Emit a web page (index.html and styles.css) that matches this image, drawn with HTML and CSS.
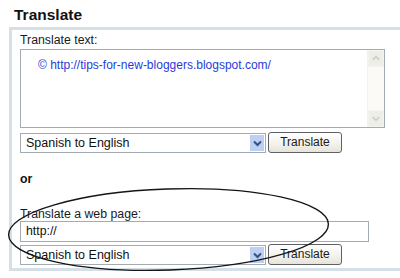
FILE: index.html
```html
<!DOCTYPE html>
<html>
<head>
<meta charset="utf-8">
<link rel="stylesheet" href="styles.css">
</head>
<body>
<div class="page">
  <h2 class="title">Translate</h2>
  <div class="box">
    <div class="label">Translate text:</div>
    <div class="textarea">
      <div class="ta-text">© http://tips-for-new-bloggers.blogspot.com/</div>
      <div class="scroll">
        <div class="sbtn"><svg width="15" height="15" viewBox="0 0 15 15"><path d="M4 9 L7.5 5.5 L11 9" fill="none" stroke="#cfcfc6" stroke-width="1.6"/></svg></div>
        <div class="strack"></div>
        <div class="sbtn"><svg width="15" height="15" viewBox="0 0 15 15"><path d="M4 6 L7.5 9.5 L11 6" fill="none" stroke="#cfcfc6" stroke-width="1.6"/></svg></div>
      </div>
    </div>
    <div class="row">
      <div class="select"><span class="sel-text">Spanish to English</span><span class="arrow"><svg width="9" height="7" viewBox="0 0 9 7"><path d="M1 1.5 L4.5 5 L8 1.5" fill="none" stroke="#3b4f7a" stroke-width="2"/></svg></span></div>
      <div class="button">Translate</div>
    </div>
    <div class="or">or</div>
    <div class="label label2">Translate a web page:</div>
    <div class="input">http://</div>
    <div class="row row2">
      <div class="select"><span class="sel-text">Spanish to English</span><span class="arrow"><svg width="9" height="7" viewBox="0 0 9 7"><path d="M1 1.5 L4.5 5 L8 1.5" fill="none" stroke="#3b4f7a" stroke-width="2"/></svg></span></div>
      <div class="button">Translate</div>
    </div>
  </div>
  <svg class="circle" width="400" height="278" viewBox="0 0 400 278"><ellipse cx="168.5" cy="229.5" rx="160" ry="40.5" transform="rotate(-2 168.5 229.5)" fill="none" stroke="#151515" stroke-width="1.4"/></svg>
</div>
</body>
</html>
```

FILE: styles.css
```css
html, body {
  margin: 0;
  padding: 0;
  background: #ffffff;
}
.page {
  position: relative;
  width: 400px;
  height: 278px;
  overflow: hidden;
  font-family: "Liberation Sans", Arial, sans-serif;
  color: #1a1a1a;
}
.title {
  margin: 0;
  padding: 5px 0 0 14px;
  height: 22px;
  font-size: 15.5px;
  font-weight: bold;
  line-height: 19px;
  color: #111;
}
.box {
  margin-left: 9px;
  width: 420px;
  border: 3px solid #d4dfe6;
  border-right: none;
  padding: 3px 0 3px 8px;
  display: flex;
  flex-direction: column;
  align-items: flex-start;
}
.label {
  font-size: 12.3px;
  line-height: 15px;
  height: 16px;
  color: #1a1a1a;
}
.textarea {
  width: 363px;
  height: 77px;
  border: 1px solid #a3abb3;
  display: flex;
  justify-content: space-between;
}
.ta-text {
  padding: 8px 0 0 17px;
  font-size: 12px;
  line-height: 14px;
  color: #1f3dd6;
}
.scroll {
  width: 16px;
  display: flex;
  flex-direction: column;
  background: #fbfaf6;
  border-left: 1px solid #f2f2ee;
}
.sbtn {
  height: 15px;
  background: #eeeee8;
  border: 1px solid #f4f4ef;
  display: flex;
  align-items: center;
  justify-content: center;
}
.strack {
  flex: 1;
}
.row {
  display: flex;
  align-items: flex-start;
  gap: 2px;
  margin-top: 4px;
}
.select {
  width: 244px;
  height: 18px;
  border: 1px solid #a3abb3;
  display: flex;
  align-items: center;
  justify-content: space-between;
  margin-top: 1px;
  background: #fff;
}
.sel-text {
  padding-left: 5px;
  font-size: 12.5px;
  color: #111;
}
.arrow {
  width: 14px;
  height: 16px;
  margin-right: 1px;
  background: #bcd0f4;
  display: flex;
  align-items: center;
  justify-content: center;
}
.button {
  width: 72px;
  height: 19px;
  border: 1px solid #5e6166;
  border-radius: 3px;
  background: linear-gradient(#ffffff, #f3f1ea 60%, #e6e3da);
  font-size: 12px;
  line-height: 19px;
  text-align: center;
  color: #1a1a1a;
}
.or {
  margin-top: 19px;
  font-size: 12.3px;
  font-weight: bold;
  line-height: 15px;
  color: #111;
}
.label2 {
  margin-top: 20px;
  height: 14px;
}
.input {
  width: 342px;
  height: 19px;
  border: 1px solid #a3abb3;
  padding-left: 5px;
  font-size: 12.3px;
  line-height: 19px;
  color: #111;
}
.row2 {
  margin-top: 2px;
}
.circle {
  position: absolute;
  left: 0;
  top: 0;
  pointer-events: none;
}
```
